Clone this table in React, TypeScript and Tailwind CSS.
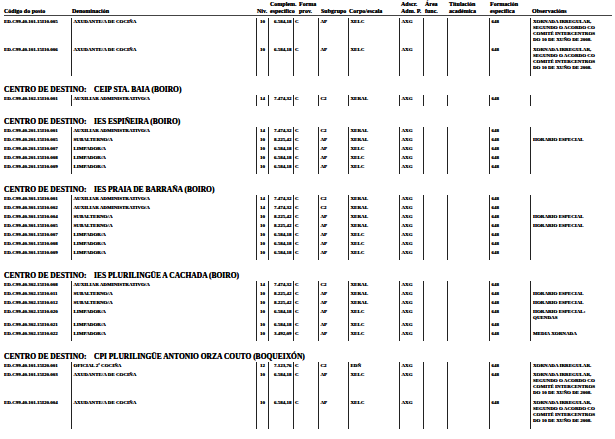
import React from 'react';

interface Posto {
  code: string;
  denom: string;
  niv: string;
  complem: string;
  forma: string;
  subgrupo: string;
  corpo: string;
  adscr: string;
  formacion: string;
  obs: string[];
}

interface Centro {
  name?: string;
  rows: Posto[];
}

const cols = 'grid grid-cols-[71px_185px_12px_25px_25px_30px_51px_24px_24px_42px_41px_1fr]';
const line = 'border-l border-[#222]';

const XORNADA = ['XORNADA IRREGULAR,', 'SEGUNDO O ACORDO CO', 'COMITÉ INTERCENTROS', 'DO 10 DE XUÑO DE 2008.'];

const p = (
  code: string,
  denom: string,
  niv: string,
  complem: string,
  subgrupo: string,
  corpo: string,
  obs: string[] = []
): Posto => ({ code, denom, niv, complem, forma: 'C', subgrupo, corpo, adscr: 'AXG', formacion: '648', obs });

const AUX = 'AUXILIAR ADMINISTRATIVO/A';
const SUB = 'SUBALTERNO/A';
const LIM = 'LIMPADOR/A';
const AXU = 'AXUDANTE/A DE COCIÑA';
const HE = ['HORARIO ESPECIAL'];

const centros: Centro[] = [
  {
    rows: [
      p('ED.C99.40.101.15I10.005', AXU, '10', '6.584,18', 'AP', 'XELC', XORNADA),
      p('ED.C99.40.101.15I10.006', AXU, '10', '6.584,18', 'AP', 'XELC', XORNADA),
    ],
  },
  {
    name: 'CEIP STA. BAIA (BOIRO)',
    rows: [p('ED.C99.40.102.15I10.001', AUX, '14', '7.474,32', 'C2', 'XERAL')],
  },
  {
    name: 'IES ESPIÑEIRA (BOIRO)',
    rows: [
      p('ED.C99.40.201.15I10.001', AUX, '14', '7.474,32', 'C2', 'XERAL'),
      p('ED.C99.40.201.15I10.005', SUB, '10', '8.225,42', 'AP', 'XERAL', HE),
      p('ED.C99.40.201.15I10.007', LIM, '10', '6.584,18', 'AP', 'XELC'),
      p('ED.C99.40.201.15I10.008', LIM, '10', '6.584,18', 'AP', 'XELC'),
      p('ED.C99.40.201.15I10.009', LIM, '10', '6.584,18', 'AP', 'XELC'),
    ],
  },
  {
    name: 'IES PRAIA DE BARRAÑA (BOIRO)',
    rows: [
      p('ED.C99.40.301.15I10.001', AUX, '14', '7.474,32', 'C2', 'XERAL'),
      p('ED.C99.40.301.15I10.002', AUX, '14', '7.474,32', 'C2', 'XERAL'),
      p('ED.C99.40.301.15I10.004', SUB, '10', '8.225,42', 'AP', 'XERAL', HE),
      p('ED.C99.40.301.15I10.005', SUB, '10', '8.225,42', 'AP', 'XERAL', HE),
      p('ED.C99.40.301.15I10.007', LIM, '10', '6.584,18', 'AP', 'XELC'),
      p('ED.C99.40.301.15I10.008', LIM, '10', '6.584,18', 'AP', 'XELC'),
      p('ED.C99.40.301.15I10.009', LIM, '10', '6.584,18', 'AP', 'XELC'),
    ],
  },
  {
    name: 'IES PLURILINGÜE A CACHADA (BOIRO)',
    rows: [
      p('ED.C99.40.302.15I10.008', AUX, '14', '7.474,32', 'C2', 'XERAL'),
      p('ED.C99.40.302.15I10.011', SUB, '10', '8.225,42', 'AP', 'XERAL', HE),
      p('ED.C99.40.302.15I10.012', SUB, '10', '8.225,42', 'AP', 'XERAL', HE),
      p('ED.C99.40.302.15I10.020', LIM, '10', '6.584,18', 'AP', 'XELC', ['HORARIO ESPECIAL:', 'QUENDAS']),
      p('ED.C99.40.302.15I10.021', LIM, '10', '6.584,18', 'AP', 'XELC'),
      p('ED.C99.40.302.15I10.022', LIM, '10', '3.492,09', 'AP', 'XELC', ['MEDIA XORNADA']),
    ],
  },
  {
    name: 'CPI PLURILINGÜE ANTONIO ORZA COUTO (BOQUEIXÓN)',
    rows: [
      p('ED.C99.40.101.15I20.001', 'OFICIAL 2ª COCIÑA', '12', '7.123,76', 'C2', 'EDÑ', ['XORNADA IRREGULAR.']),
      p('ED.C99.40.101.15I20.003', AXU, '10', '6.584,18', 'AP', 'XELC', XORNADA),
      p('ED.C99.40.101.15I20.004', AXU, '10', '6.584,18', 'AP', 'XELC', XORNADA),
    ],
  },
];

function HeaderCell({ top, bottom, className = '' }: { top?: string; bottom: string; className?: string }) {
  return (
    <div className={`flex flex-col justify-end whitespace-nowrap ${className}`}>
      {top && <span>{top}</span>}
      <span>{bottom}</span>
    </div>
  );
}

function Header() {
  return (
    <div>
      <div className={`${cols} h-[15px] pt-[1px] text-[6px] leading-[7px] font-bold`}>
        <HeaderCell bottom="Código do posto" className="pl-[4px]" />
        <HeaderCell bottom="Denominación" className="pl-[1px]" />
        <HeaderCell bottom="Niv." className="pl-[1px]" />
        <HeaderCell top="Complem." bottom="específico" className="pl-[2px]" />
        <HeaderCell top="Forma" bottom="prov." className="pl-[6px]" />
        <HeaderCell bottom="Subgrupo" className="pl-[3px]" />
        <HeaderCell bottom="Corpo/escala" className="pl-[1px]" />
        <HeaderCell top="Adscr." bottom="Adm. P." className="pl-[2px]" />
        <HeaderCell top="Área" bottom="func." className="pl-[2px]" />
        <HeaderCell top="Titulación" bottom="académica" className="pl-[2px]" />
        <HeaderCell top="Formación" bottom="específica" className="pl-[1px]" />
        <HeaderCell bottom="Observacións" className="pl-[2px]" />
      </div>
      <div className="ml-[4px] mr-[3px] h-px bg-[#444]" />
    </div>
  );
}

function PostoRow({ r }: { r: Posto }) {
  const h = r.obs.length > 2 ? 'h-[28px]' : r.obs.length === 2 ? 'h-[13px]' : 'h-[9px]';
  const cell = `${line} pt-[1px] whitespace-nowrap`;
  return (
    <div className={`${cols} ${h} text-[5px] leading-[6px] font-bold text-black`}>
      <div className="pl-[4px] pt-[1px] whitespace-nowrap">{r.code}</div>
      <div className={`${cell} pl-[1.5px]`}>{r.denom}</div>
      <div className={`${cell} text-center`}>{r.niv}</div>
      <div className={`${cell} text-right pr-[1.5px]`}>{r.complem}</div>
      <div className={`${cell} pl-[1px]`}>{r.forma}</div>
      <div className={`${cell} pl-[1.5px]`}>{r.subgrupo}</div>
      <div className={`${cell} pl-[1.5px]`}>{r.corpo}</div>
      <div className={`${cell} pl-[1.5px]`}>{r.adscr}</div>
      <div className={cell} />
      <div className={cell} />
      <div className={`${cell} pl-[1.5px]`}>{r.formacion}</div>
      <div className={`${cell} pl-[2px]`}>
        {r.obs.map((o, i) => (
          <div key={i}>{o}</div>
        ))}
      </div>
    </div>
  );
}

function Spacer() {
  return (
    <div className={`${cols} h-[2px]`}>
      <div />
      {Array.from({ length: 11 }).map((_, i) => (
        <div key={i} className={line} />
      ))}
    </div>
  );
}

function Section({ c, first }: { c: Centro; first: boolean }) {
  return (
    <div className={c.name ? (first ? 'mt-[9px]' : 'mt-[11px]') : 'mt-[2px]'}>
      {c.name && (
        <div className="h-[10px] pl-[4px] text-[7.5px] leading-[10px] font-bold whitespace-nowrap">
          <span className="inline-block w-[90px]">CENTRO DE DESTINO:</span>
          <span>{c.name}</span>
        </div>
      )}
      {c.rows.map((r) => (
        <PostoRow key={r.code} r={r} />
      ))}
      <Spacer />
    </div>
  );
}

export default function App() {
  return (
    <div className="w-[615px] h-[439px] overflow-hidden bg-white text-black [font-family:'Liberation_Serif',serif] [text-shadow:0_0_0.4px_#000]">
      <Header />
      {centros.map((c, i) => (
        <Section key={i} c={c} first={i === 1} />
      ))}
    </div>
  );
}
